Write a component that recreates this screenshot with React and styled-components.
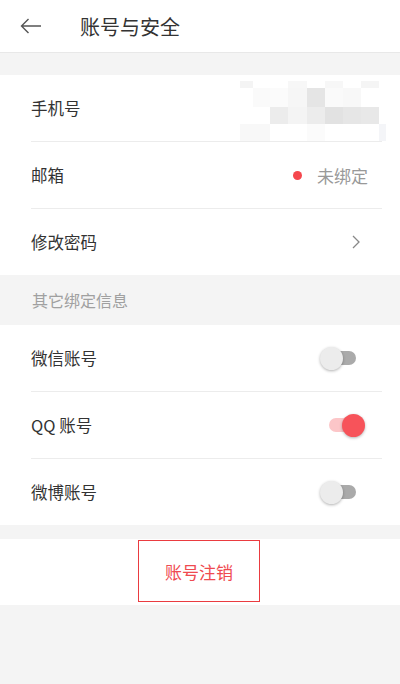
import React from 'react';
import styled, { createGlobalStyle } from 'styled-components';

const GlobalStyle = createGlobalStyle`
  html, body {
    margin: 0;
    padding: 0;
    background: #f4f4f4;
  }
  body {
    font-family: "Noto Sans CJK SC", "Noto Sans", sans-serif;
    color: #333;
  }
`;

const Page = styled.div`
  width: 400px;
  height: 684px;
  background: #f4f4f4;
  display: flex;
  flex-direction: column;
  overflow: hidden;
`;

const Header = styled.div`
  height: 52px;
  background: #fff;
  border-bottom: 1px solid #e8e8e8;
  display: flex;
  align-items: center;
  padding-left: 20px;
  box-sizing: content-box;
`;

const Back = styled.div`
  width: 22px;
  height: 20px;
  display: flex;
  align-items: center;
`;

const Title = styled.div`
  margin-left: 38px;
  font-size: 20px;
  color: #333;
`;

const Gap = styled.div`
  height: ${p => p.h}px;
  flex-shrink: 0;
`;

const Group = styled.div`
  background: #fff;
  padding-left: 31px;
  padding-right: ${p => (p.flush ? 0 : 18)}px;
`;

const Row = styled.div`
  height: 66px;
  display: flex;
  align-items: center;
  justify-content: space-between;
  border-top: ${p => (p.first ? 'none' : '1px solid #ececec')};
  margin-right: ${p => p.mr || 0}px;
`;

const Label = styled.div`
  font-size: 16.5px;
  color: #333;
`;

const Right = styled.div`
  display: flex;
  align-items: center;
  margin-right: ${p => p.mr || 0}px;
`;

const Dot = styled.span`
  width: 9px;
  height: 9px;
  border-radius: 50%;
  background: #f5474d;
  margin-right: 15px;
`;

const Muted = styled.span`
  font-size: 17px;
  color: #999;
`;

const SectionTitle = styled.div`
  height: 50px;
  display: flex;
  align-items: center;
  padding-left: 32px;
  font-size: 16px;
  color: #a0a0a0;
`;

const Track = styled.div`
  width: 30px;
  height: 14px;
  border-radius: 7px;
  background: ${p => (p.on ? '#fcc6c8' : '#aaaaaa')};
  display: flex;
  align-items: center;
  justify-content: ${p => (p.on ? 'flex-end' : 'flex-start')};
  margin-right: ${p => (p.on ? '0px' : '3px')};
`;

const Knob = styled.div`
  width: 23px;
  height: 23px;
  border-radius: 50%;
  flex-shrink: 0;
  background: ${p => (p.on ? '#f7535a' : '#ececec')};
  box-shadow: 0 1px 3px rgba(0, 0, 0, 0.3);
  margin: ${p => (p.on ? '0 -6px 0 0' : '0 0 0 -6px')};
`;

const ButtonBlock = styled.div`
  background: #fff;
  height: 66px;
  display: flex;
  justify-content: center;
  align-items: flex-start;
  padding-top: 1px;
  box-sizing: border-box;
`;

const Cancel = styled.div`
  width: 122px;
  height: 62px;
  box-sizing: border-box;
  border: 1.5px solid #ea3b40;
  display: flex;
  align-items: center;
  justify-content: center;
  font-size: 17px;
  color: #ef4a50;
  margin-left: -2px;
`;

const Mosaic = () => {
  const cells = [
    [240, 81, 13, 7, '#f4f4f4'], [288, 81, 19, 7, '#f7f7f7'], [325, 81, 18, 7, '#f7f7f7'], [361, 81, 18, 7, '#f5f5f5'],
    [253, 88, 17, 19, '#fafafa'], [270, 88, 18, 19, '#fbfbfb'], [288, 88, 19, 19, '#f6f6f6'],
    [307, 88, 18, 19, '#e5e5e5'], [325, 88, 18, 19, '#fafafa'], [343, 88, 18, 19, '#f8f8f8'],
    [270, 107, 18, 17, '#ececec'], [288, 107, 19, 17, '#f4f4f4'], [307, 107, 18, 17, '#ececec'],
    [325, 107, 18, 17, '#e2e2e2'], [343, 107, 18, 17, '#e6e6e6'], [361, 107, 18, 17, '#e8e8e8'],
    [240, 124, 30, 17, '#f8f8f8'], [307, 124, 18, 17, '#fbfbfb'], [379, 124, 7, 17, '#f4f5f8'],
  ];
  return (
    <svg width="160" height="66" viewBox="240 75 160 66">
      {cells.map(([x, y, w, h, c], i) => (
        <rect key={i} x={x} y={y} width={w} height={h} fill={c} />
      ))}
    </svg>
  );
};

const Switch = ({ on }) => (
  <Track on={on ? 1 : 0}>
    <Knob on={on ? 1 : 0} />
  </Track>
);

const App = () => (
  <Page>
    <GlobalStyle />
    <Header>
      <Back>
        <svg width="22" height="16" viewBox="0 0 22 16">
          <path d="M21 8H1.5M8.5 1L1.5 8l7 7" fill="none" stroke="#555" strokeWidth="1.4" />
        </svg>
      </Back>
      <Title>账号与安全</Title>
    </Header>
    <Gap h={22} />
    <Group flush>
      <Row first>
        <Label>手机号</Label>
        <Mosaic />
      </Row>
      <Row mr={18}>
        <Label>邮箱</Label>
        <Right mr={14}>
          <Dot />
          <Muted>未绑定</Muted>
        </Right>
      </Row>
      <Row mr={18}>
        <Label>修改密码</Label>
        <Right mr={22}>
          <svg width="8" height="14" viewBox="0 0 8 14">
            <path d="M1 1l6 6-6 6" fill="none" stroke="#888" strokeWidth="1.3" />
          </svg>
        </Right>
      </Row>
    </Group>
    <SectionTitle>其它绑定信息</SectionTitle>
    <Group>
      <Row first>
        <Label>微信账号</Label>
        <Right mr={23}>
          <Switch />
        </Right>
      </Row>
      <Row>
        <Label>QQ 账号</Label>
        <Right mr={23}>
          <Switch on />
        </Right>
      </Row>
      <Row>
        <Label>微博账号</Label>
        <Right mr={23}>
          <Switch />
        </Right>
      </Row>
    </Group>
    <Gap h={14} />
    <ButtonBlock>
      <Cancel>账号注销</Cancel>
    </ButtonBlock>
  </Page>
);

export default App;
